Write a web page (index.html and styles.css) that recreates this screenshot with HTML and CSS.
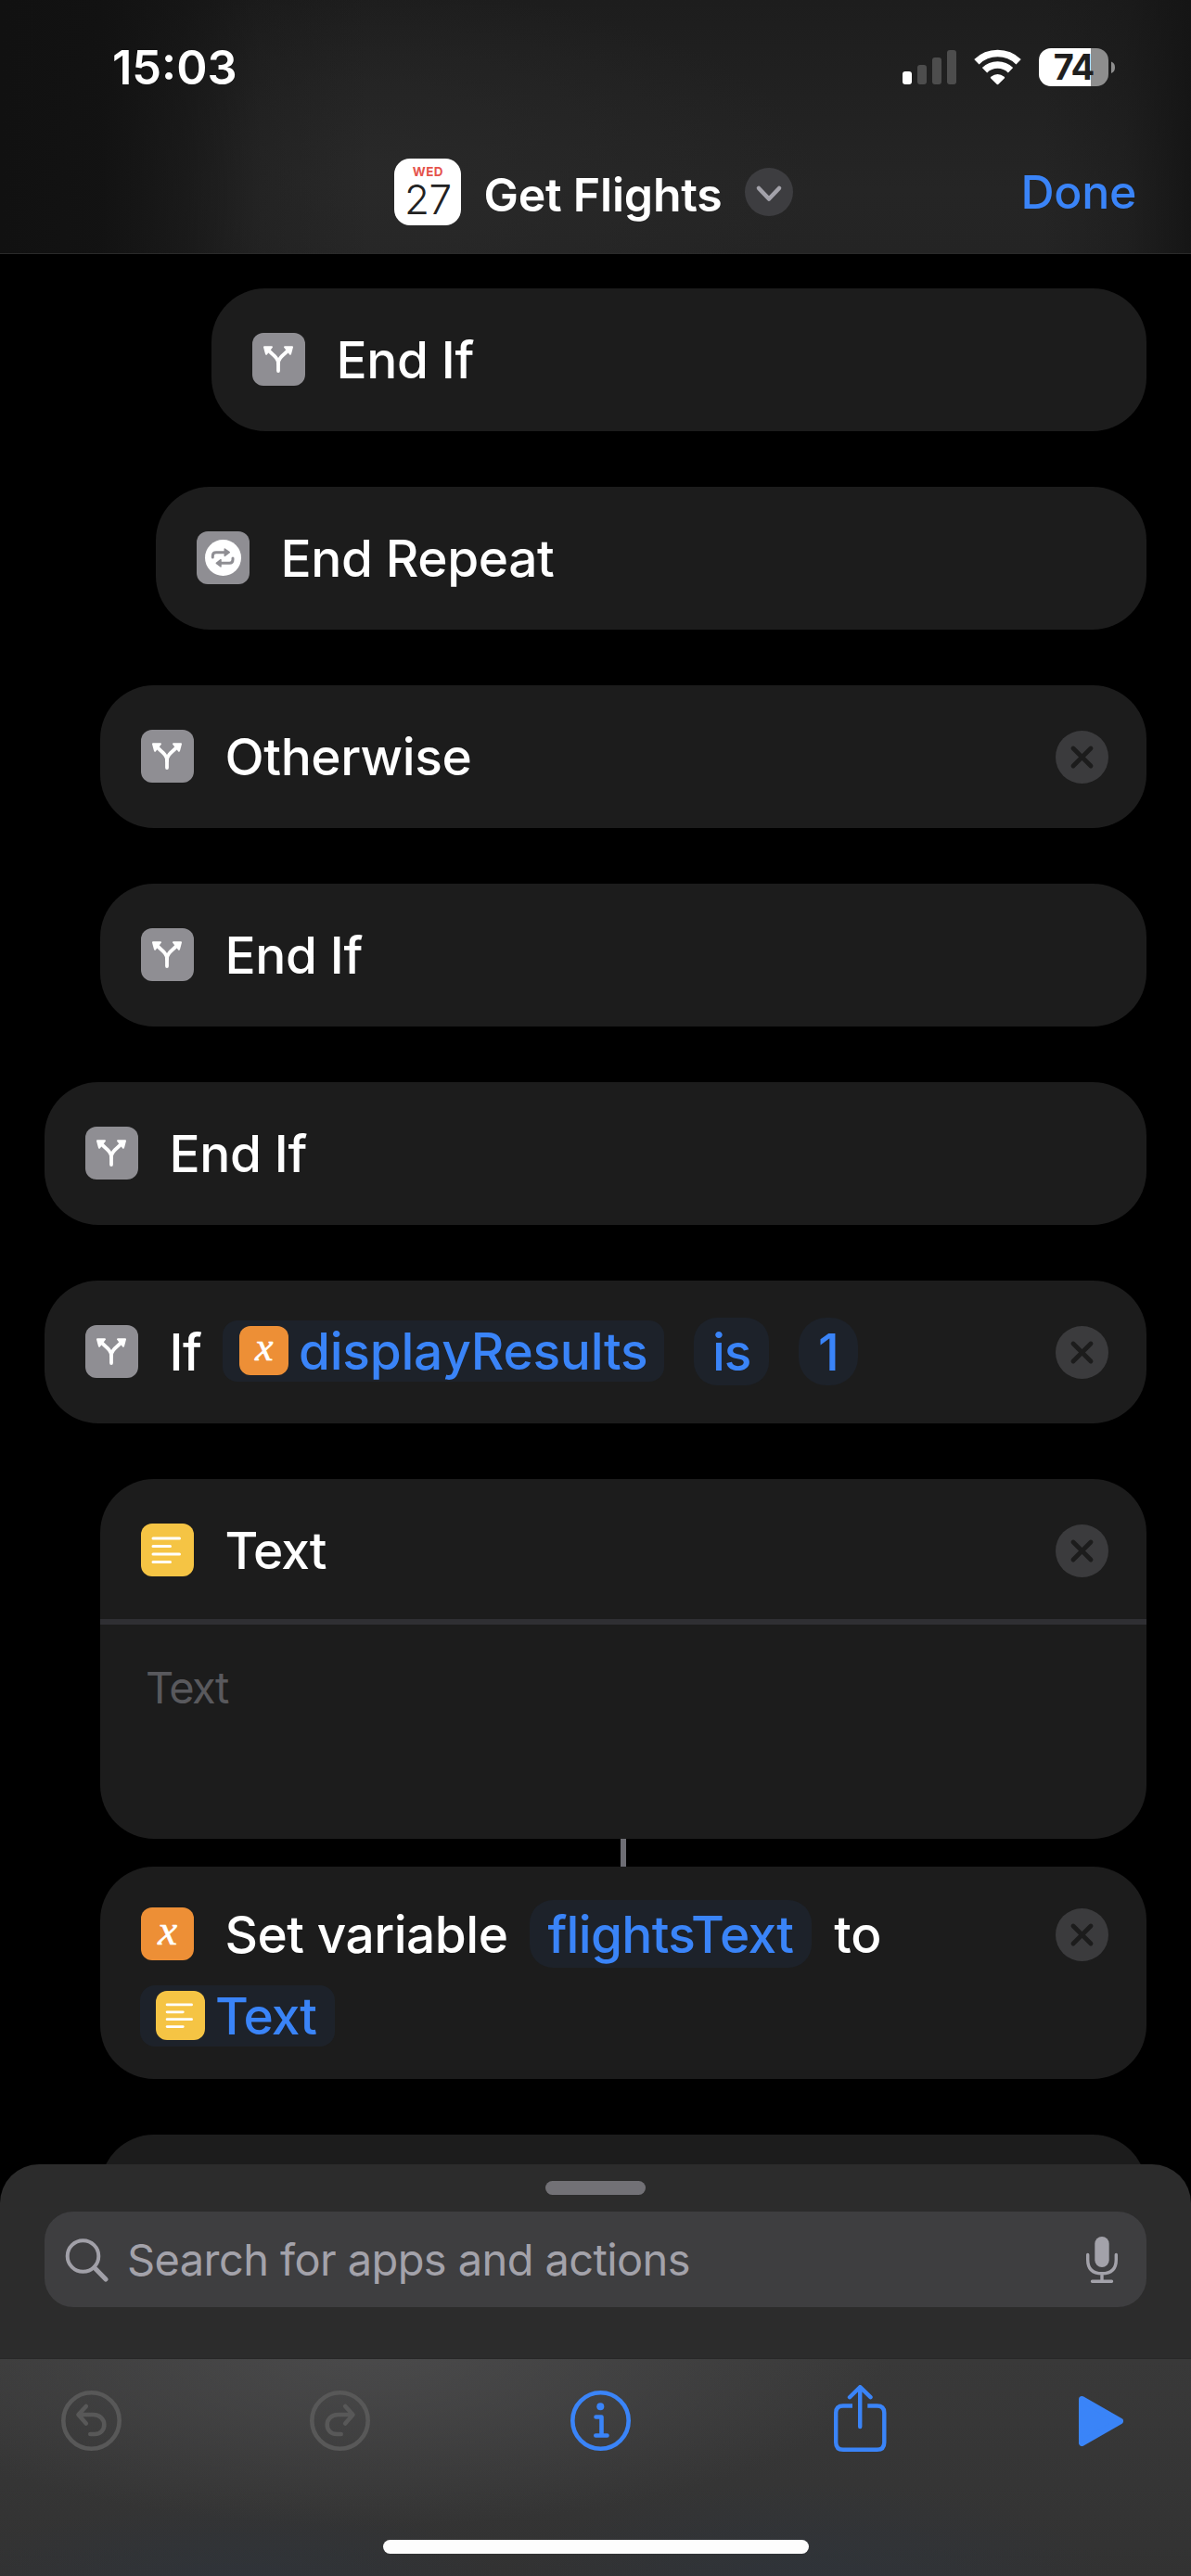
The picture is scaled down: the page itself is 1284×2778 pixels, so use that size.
FILE: index.html
```html
<!DOCTYPE html>
<html lang="en">
<head>
<meta charset="utf-8">
<title>Get Flights</title>
<link rel="stylesheet" href="styles.css">
</head>
<body>
<svg class="defs" width="0" height="0" aria-hidden="true">
  <symbol id="branch" viewBox="0 0 57 57">
    <g fill="none" stroke="#fff" stroke-width="3.8" stroke-linecap="round"><path d="M28 41V32"/><path d="M28 33C28 28 31.500 25.500 38 19.500"/><path d="M28 33C28 28 24.500 25.500 18 19.500"/></g>
    <g fill="#fff" stroke="#fff" stroke-width="2" stroke-linejoin="round"><path d="M35 15.200L43 15.200L41 22.800Z"/><path d="M21 15.200L13 15.200L15 22.800Z"/></g>
  </symbol>
  <symbol id="repeat" viewBox="0 0 57 57">
    <circle cx="28.500" cy="28.500" r="19.500" fill="#fff"/>
    <g fill="none" stroke="#8f8e93" stroke-width="3" stroke-linecap="round"><path d="M17.300 28V26.500Q17.300 22.700 21 22.700H30"/><path d="M39 29V30.500Q39 34.300 35.300 34.300H26"/></g>
    <g fill="#8f8e93" stroke="#8f8e93" stroke-width="1.500" stroke-linejoin="round"><path d="M30.300 19V26.400L35.300 22.700Z"/><path d="M26 30.600V38L21.300 34.300Z"/></g>
  </symbol>
  <symbol id="lines" viewBox="0 0 57 57">
    <path d="M13 16H41.500M13 24.500H31.500M13 33H41.500M13 41.500H31.500" stroke="#fff" stroke-width="3" stroke-linecap="round"/>
  </symbol>
  <symbol id="remove" viewBox="0 0 57 57">
    <circle cx="28.500" cy="28.500" r="28.500" fill="#3b3b3d"/>
    <path d="M19 19L38 38M38 19L19 38" stroke="#1c1c1c" stroke-width="4.800" stroke-linecap="round"/>
  </symbol>
</svg>
<div class="screen">
  <header class="header">
    <div class="status">
      <span class="time">15:03</span>
      <div class="status-icons">
        <svg width="58" height="41" viewBox="0 0 58 41"><rect x="0" y="25" width="10" height="14" rx="3" fill="#fff"/><g fill="#4d4d4d"><rect x="16" y="18" width="10" height="21" rx="3"/><rect x="32" y="10" width="10" height="29" rx="3"/><rect x="48" y="2" width="10" height="37" rx="3"/></g></svg>
        <svg class="wifi" width="51" height="41" viewBox="0 0 51 41"><g fill="none" stroke="#fff" stroke-width="7.600"><path d="M2.900 14.700A32.500 32.500 0 0 1 48.100 14.700"/><path d="M11.500 23.700A20 20 0 0 1 39.500 23.700"/></g><path d="M25.500 39.200Q24.800 39.200 24.300 38.600L18.200 32.500Q17.300 31.500 18.300 30.700Q25.500 25.300 32.700 30.700Q33.700 31.500 32.800 32.500L26.700 38.600Q26.200 39.200 25.500 39.200Z" fill="#fff"/></svg>
        <div class="battery"><span>74</span></div>
        <svg width="4" height="41" viewBox="0 0 4 41"><path d="M0 14.500Q4 16 4 20.700Q4 25.400 0 27Z" fill="#8e8e8e"/></svg>
      </div>
    </div>
    <nav class="nav">
      <span></span>
      <div class="title">
        <div class="calendar"><span class="weekday">WED</span><span class="day">27</span></div>
        <span class="name">Get Flights</span>
        <svg class="chevron" width="52" height="52" viewBox="0 0 52 52"><circle cx="26" cy="26" r="26" fill="#3d3d40"/><path d="M15 22L26 33.500L37 22" fill="none" stroke="#a3a2aa" stroke-width="4.600" stroke-linecap="round" stroke-linejoin="round"/></svg>
      </div>
      <span class="done">Done</span>
    </nav>
  </header>

  <main class="actions">
    <section class="card depth-3"><div class="row"><div class="icon gray"><svg><use href="#branch"/></svg></div><span class="label">End If</span></div></section>
    <section class="card depth-2"><div class="row"><div class="icon gray"><svg><use href="#repeat"/></svg></div><span class="label">End Repeat</span></div></section>
    <section class="card depth-1"><div class="row"><div class="icon gray"><svg><use href="#branch"/></svg></div><span class="label">Otherwise</span><svg class="remove"><use href="#remove"/></svg></div></section>
    <section class="card depth-1"><div class="row"><div class="icon gray"><svg><use href="#branch"/></svg></div><span class="label">End If</span></div></section>
    <section class="card"><div class="row"><div class="icon gray"><svg><use href="#branch"/></svg></div><span class="label">End If</span></div></section>
    <section class="card"><div class="row"><div class="icon gray"><svg><use href="#branch"/></svg></div><span class="label if">If</span>
      <span class="token variable first"><span class="icon small orange">x</span><span class="var-name">displayResults</span></span>
      <span class="token is"><span>is</span></span><span class="token one"><span>1</span></span>
      <svg class="remove"><use href="#remove"/></svg></div></section>
    <section class="card depth-1 text-card">
      <div class="row"><div class="icon yellow"><svg><use href="#lines"/></svg></div><span class="label tight">Text</span><svg class="remove"><use href="#remove"/></svg></div>
      <div class="field"><span>Text</span></div>
    </section>
    <div class="connector depth-1"></div>
    <section class="card depth-1 set-card">
      <div class="row"><div class="icon orange">x</div><span class="label set">Set variable</span><span class="token flights"><span>flightsText</span></span><span class="to">to</span><svg class="remove"><use href="#remove"/></svg></div>
      <div class="row second"><span class="token variable"><span class="icon small yellow"><svg><use href="#lines"/></svg></span><span class="tight">Text</span></span></div>
    </section>
    <section class="card depth-1"></section>
  </main>

  <div class="sheet">
    <div class="grabber"></div>
    <div class="search">
      <svg width="48" height="48" viewBox="0 0 48 48"><circle cx="19.500" cy="20" r="16.800" fill="none" stroke="#a1a0a8" stroke-width="4"/><path d="M31.800 32.500L44 45" stroke="#a1a0a8" stroke-width="5" stroke-linecap="round"/></svg>
      <span class="query">Search for apps and actions</span>
      <svg width="34" height="50" viewBox="0 0 34 50"><rect x="9.300" y="0" width="15.400" height="33" rx="7.700" fill="#a3a2aa"/><path d="M1.700 19.500V25Q1.700 39.800 17 39.800Q32.300 39.800 32.300 25V19.500M17 40V48M6.500 48.300H27.500" fill="none" stroke="#a3a2aa" stroke-width="3.400" stroke-linecap="round"/></svg>
    </div>
  </div>

  <footer class="toolbar">
    <div class="tools">
      <svg class="undo" width="65" height="65" viewBox="0 0 65 65" fill="none" stroke="#585858" stroke-width="4.600" stroke-linecap="round" stroke-linejoin="round"><circle cx="32.500" cy="32.500" r="30.200"/><path d="M26.800 17L18.500 26L26.800 35.500M19 26H34.500C50 26 50 47 36 47H31.300"/></svg>
      <svg class="redo" width="65" height="65" viewBox="0 0 65 65" fill="none" stroke="#585858" stroke-width="4.600" stroke-linecap="round" stroke-linejoin="round"><circle cx="32.500" cy="32.500" r="30.200"/><path d="M38.200 17L46.500 26L38.200 35.500M46 26H30.500C15 26 15 47 29 47H33.700"/></svg>
      <svg class="info" width="65" height="65" viewBox="0 0 65 65" fill="none" stroke="#3a84f8" stroke-width="4.600" stroke-linecap="round" stroke-linejoin="round"><circle cx="32.500" cy="32.500" r="30.200"/><path d="M27.500 28.500H33.500V48.500M27.300 48.500H39.500"/><circle cx="32.300" cy="17.300" r="4" fill="#3a84f8" stroke="none"/></svg>
      <svg class="share" width="57" height="73" viewBox="0 0 57 73" fill="none" stroke="#3a84f8" stroke-width="4.400" stroke-linecap="round" stroke-linejoin="round"><path d="M20 22.500H10Q2.200 22.500 2.200 30V62Q2.200 69.800 10 69.800H46.500Q54.300 69.800 54.300 62V30Q54.300 22.500 46.500 22.500H36.300" stroke-linecap="butt"/><path d="M28.200 45V2.500M17 13.200L28.200 2.200L39.500 13.200"/></svg>
      <svg class="play" width="48" height="54" viewBox="0 0 48 54"><path d="M3.500 3.500L44.500 27L3.500 50.500Z" fill="#3a84f8" stroke="#3a84f8" stroke-width="7" stroke-linejoin="round"/></svg>
    </div>
    <div class="home"></div>
  </footer>
</div>
</body>
</html>
```
FILE: styles.css
```css
* { box-sizing: border-box; }
body { margin: 0; background: #000; font-family: Inter, "Liberation Sans", sans-serif; color: #fff; }
svg { display: block; flex: none; }
.defs { display: none; }
.screen { width: 1284px; height: 2778px; display: flex; flex-direction: column; overflow: hidden; }

.header {
  height: 274px; flex: none; border-bottom: 1px solid #2a2a2a;
  background:
    linear-gradient(90deg, #111 0, rgba(17,17,17,.92) 110px, rgba(17,17,17,.6) 200px, rgba(17,17,17,.2) 280px, rgba(17,17,17,0) 400px),
    linear-gradient(270deg, rgba(20,20,20,.9) 0, rgba(20,20,20,.3) 70px, rgba(20,20,20,0) 160px),
    radial-gradient(ellipse 480px 200px at 400px 190px, rgba(42,42,42,.8), rgba(42,42,42,0)),
    linear-gradient(180deg, #1d1d1d, #252525 75%, #242424);
}
.status { height: 144px; padding: 0 82px 0 121px; display: flex; justify-content: space-between; align-items: center; }
.time { font-size: 50.5px; font-weight: 600; }
.status-icons { display: flex; align-items: center; }
.wifi { margin: 0 19px; }
.battery { width: 75px; height: 41px; border-radius: 13px; background: linear-gradient(90deg, #fff 56px, #8e8e8e 56px); margin-right: 3px; color: #1f1f1f; font-size: 38px; font-weight: 700; line-height: 41px; text-align: center; letter-spacing: -1px; }
.nav { height: 126px; padding: 0 59px 0 55px; display: grid; grid-template-columns: 1fr auto 1fr; align-items: center; }
.title { display: flex; align-items: center; gap: 24px; }
.calendar { width: 72px; height: 72px; border-radius: 17px; background: #fff; display: flex; flex-direction: column; align-items: center; padding-top: 8px; }
.weekday { color: #e5534c; font-size: 13.500px; font-weight: 700; line-height: 13px; letter-spacing: .5px; }
.day { color: #222; font-size: 44px; font-weight: 300; line-height: 46px; letter-spacing: -.5px; }
.name { font-size: 50px; font-weight: 570; line-height: 60px; padding-top: 6px; letter-spacing: -.2px; }
.done { justify-self: end; color: #3a84f8; font-size: 50px; font-weight: 550; line-height: 60px; letter-spacing: -.3px; }

.actions { flex: 1; min-height: 0; overflow: hidden; padding: 37px 48px 0; }
.card { height: 154px; margin-bottom: 60px; padding: 48px 41px 0 44px; border-radius: 58px; background: #1c1c1c; }
.depth-1 { margin-left: 60px; }
.depth-2 { margin-left: 120px; }
.depth-3 { margin-left: 180px; }
.row { display: flex; align-items: center; height: 58px; white-space: nowrap; font-size: 55px; line-height: 58px; font-weight: 500; letter-spacing: -.4px; }
.icon { width: 57px; height: 57px; margin-bottom: 1px; border-radius: 12px; flex: none; display: flex; justify-content: center; color: #fff; font: italic 47px/49px "Liberation Serif", serif; -webkit-text-stroke: .6px #fff; }
.icon svg { width: 100%; height: 100%; }
.icon.small { width: 53px; height: 53px; font-size: 44px; line-height: 45px; }
.gray { background: #8f8e93; }
.orange { background: #ed8f36; }
.yellow { background: #f5c444; }
.label { margin-left: 33.500px; }
.set { letter-spacing: -.5px; }
.tight { letter-spacing: -1px; }
.remove { width: 57px; height: 57px; margin-left: auto; }
.token { height: 73px; margin-bottom: 1px; border-radius: 25px; padding: 0 20px; background: #1d222a; color: #3a84f8; display: flex; align-items: center; }
.token.variable { height: 66px; margin-bottom: 2px; border-radius: 16px; padding: 0 18px; gap: 11px; }
.var-name { letter-spacing: -.25px; }
.if { width: 36px; }
.first { margin-left: 21.500px; }
.is { margin-left: 32px; padding: 0 19.500px; letter-spacing: -1px; }
.one { margin-left: 32px; padding: 0 21px; border-radius: 30px; }
.flights { margin-left: 23.500px; padding: 0 20px 0 19.500px; letter-spacing: -.7px; }
.to { margin-left: 24px; }

.text-card { height: 388px; margin-bottom: 0; padding: 0; }
.text-card .row { height: 157px; padding: 48px 41px 45px 44px; border-bottom: 6px solid #2f2f33; }
.field { padding: 38px 49px; font-size: 47px; line-height: 60px; color: #59595d; letter-spacing: -1.5px; }
.connector { height: 30px; width: 6px; margin-left: 621px; background: #6d6d74; }
.set-card { height: 229px; padding-top: 44px; }
.second { margin-top: 31px; }
.second .token { margin-left: -1px; padding: 0 20px 0 17px; }

.sheet { height: 210px; flex: none; padding: 18px 48px 0; border-radius: 42px 42px 0 0; background: #2c2c2c; border-bottom: 1px solid #272727; }
.grabber { width: 108px; height: 15px; border-radius: 7.500px; background: #727176; margin: 0 auto; }
.search { height: 103px; margin-top: 18px; border-radius: 31px; background: #3e3e40; display: flex; align-items: center; padding: 0 31px 0 22px; color: #a3a2aa; font-size: 47px; }
.query { margin-left: 19px; flex: 1; white-space: nowrap; letter-spacing: -.6px; }

.toolbar {
  height: 234px; flex: none; padding-top: 28px;
  background:
    radial-gradient(ellipse 560px 190px at 400px -10px, rgba(76,76,77,.9), rgba(76,76,77,0)),
    radial-gradient(ellipse 300px 90px at 250px 245px, rgba(46,52,60,.8), rgba(46,52,60,0)),
    radial-gradient(ellipse 330px 110px at 870px 245px, rgba(46,52,60,.8), rgba(46,52,60,0)),
    linear-gradient(180deg, #393939, #323232);
}
.tools { display: flex; align-items: center; height: 76px; padding-left: 66px; }
.redo { margin-left: 203px; }
.info { margin-left: 216px; }
.share { margin-left: 219px; margin-bottom: 4px; }
.play { margin-left: 207px; margin-top: 1px; }
.home { width: 459px; height: 15px; border-radius: 8px; background: #fdfdfd; margin: 91px 0 0 413px; }
```
